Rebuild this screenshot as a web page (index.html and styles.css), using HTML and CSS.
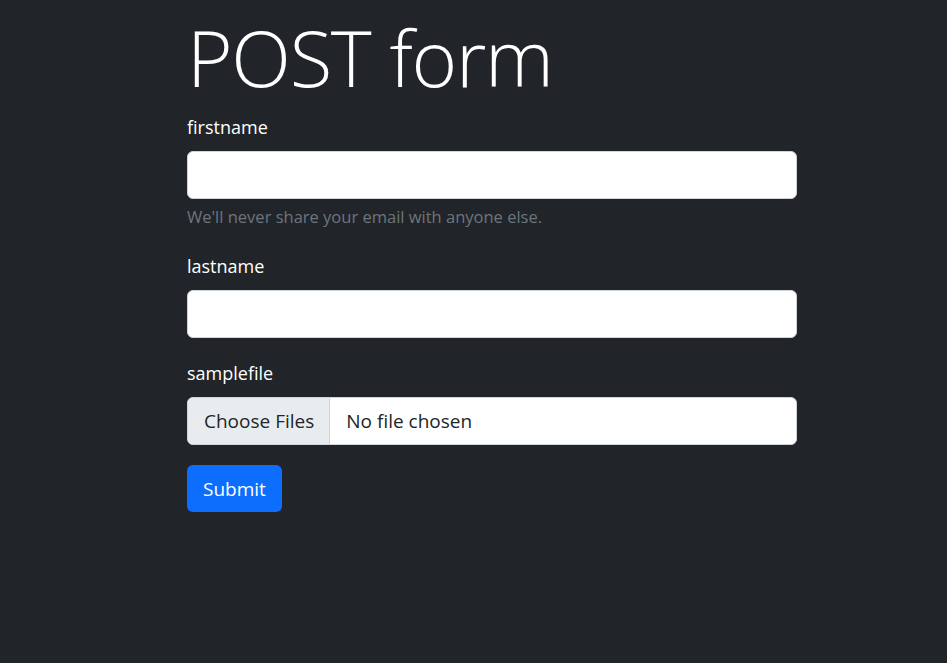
FILE: index.html
```html
<!DOCTYPE html>
<html lang="en">
<head>
<meta charset="utf-8">
<title>POST form</title>
<link rel="stylesheet" href="styles.css">
</head>
<body>
<main class="page">
  <h1 class="title">POST form</h1>
  <form class="form">
    <div class="field">
      <label class="label" for="firstname">firstname</label>
      <input class="control" id="firstname" type="text">
      <div class="help">We'll never share your email with anyone else.</div>
    </div>
    <div class="field">
      <label class="label" for="lastname">lastname</label>
      <input class="control" id="lastname" type="text">
    </div>
    <div class="field field-last">
      <label class="label" for="samplefile">samplefile</label>
      <label class="file" for="samplefile">
        <span class="file-btn">Choose Files</span>
        <span class="file-name">No file chosen</span>
        <input class="file-input" id="samplefile" type="file" multiple>
      </label>
    </div>
    <button class="submit" type="button">Submit</button>
  </form>
</main>
</body>
</html>
```
FILE: styles.css
```css
* { box-sizing: border-box; }
html, body { margin: 0; padding: 0; }
body {
  background: #212529;
  color: #fff;
  font-family: "Open Sans", "Noto Sans", sans-serif;
  min-height: 663px;
}
.page {
  width: 610px;
  margin-left: 187px;
  padding-top: 10px;
}
.title {
  font-weight: 300;
  font-size: 78px;
  line-height: 94px;
  letter-spacing: -1.3px;
  margin: 0 0 10px;
}
.form { display: flex; flex-direction: column; }
.field { display: flex; flex-direction: column; margin-bottom: 22px; }
.field-last { margin-bottom: 20px; }
.label {
  font-size: 18px;
  line-height: 27px;
  margin-bottom: 10px;
}
.control {
  height: 48px;
  width: 100%;
  border: 1px solid #ced4da;
  border-radius: 6px;
  background: #fff;
  font: inherit;
  font-size: 20px;
  padding: 8px 16px;
}
.help {
  margin-top: 6px;
  margin-bottom: 2px;
  font-size: 16.5px;
  line-height: 24px;
  color: #6c757d;
}
.file {
  display: flex;
  height: 48px;
  border: 1px solid #ced4da;
  border-radius: 6px;
  background: #fff;
  overflow: hidden;
  font-size: 19px;
  color: #212529;
  position: relative;
}
.file-btn {
  display: flex;
  align-items: center;
  padding: 0 15px 0 16px;
  background: #e9ecef;
  border-right: 1px solid #ced4da;
}
.file-name {
  display: flex;
  align-items: center;
  padding-left: 16px;
}
.file-input {
  position: absolute;
  width: 1px;
  height: 1px;
  opacity: 0;
}
.submit {
  align-self: flex-start;
  height: 47px;
  padding: 0 16px;
  border: none;
  border-radius: 6px;
  background: #0d6efd;
  color: #fff;
  font: inherit;
  font-size: 19px;
}
```
